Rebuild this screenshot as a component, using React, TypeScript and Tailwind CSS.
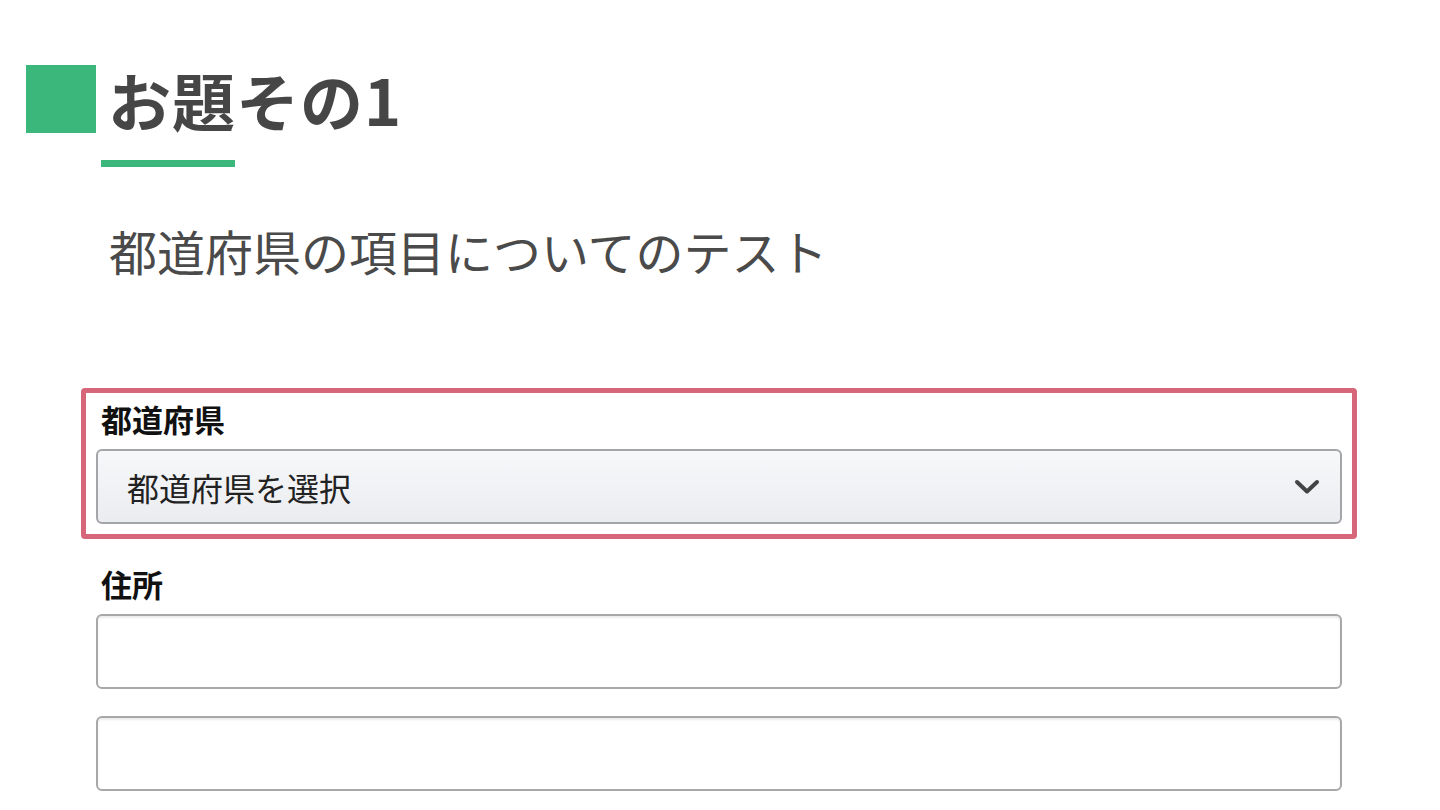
export default function App() {
  const jp = { fontFamily: '"Noto Sans CJK JP", "Noto Sans", sans-serif' };

  return (
    <div className="min-h-screen bg-white text-[#444]" style={jp}>
      {/* Title */}
      <div className="flex items-center pt-[65px] pl-[26px] gap-[12px]">
        <div className="w-[70px] h-[68px] bg-[#3cb77c]" />
        <h1 className="text-[63px] leading-[68px] font-bold text-[#464646] tracking-[1px]">
          お題その1
        </h1>
      </div>
      <div className="ml-[101px] mt-[27px] w-[134px] h-[7px] bg-[#3cb77c]" />

      <p className="ml-[109px] mt-[54px] text-[48px] leading-[58px] font-normal text-[#4a4a4a]">
        都道府県の項目についてのテスト
      </p>

      {/* Form */}
      <div className="ml-[81px] mr-[83px] mt-[109px]">
        <div className="border-[5px] border-[#d8667a] rounded-[4px] pt-[6px] pb-[10px] px-[10px]">
          <label className="block pl-[5px] text-[31px] leading-[40px] font-bold text-[#111]">
            都道府県
          </label>
          <div className="mt-[10px] h-[75px] flex items-center justify-between rounded-[6px] border-2 border-[#a3a5a8] bg-gradient-to-b from-[#f7f8fa] to-[#eaecef] pl-[29px] pr-[20px]">
            <span className="text-[32px] text-[#222]">都道府県を選択</span>
            <svg width="26" height="16" viewBox="0 0 26 16" fill="none">
              <polyline
                points="3,3 13,12.5 23,3"
                stroke="#444"
                strokeWidth="4"
                strokeLinecap="round"
                strokeLinejoin="round"
              />
            </svg>
          </div>
        </div>

        <div className="px-[15px]">
          <label className="block mt-[25px] pl-[5px] text-[31px] leading-[40px] font-bold text-[#111]">
            住所
          </label>
          <div className="mt-[10px] h-[75px] rounded-[6px] border-2 border-[#a8a8a8] bg-white shadow-[inset_0_2px_2px_rgba(0,0,0,0.08)]" />
          <div className="mt-[27px] h-[75px] rounded-[6px] border-2 border-[#a8a8a8] bg-white shadow-[inset_0_2px_2px_rgba(0,0,0,0.08)]" />
        </div>
      </div>
    </div>
  );
}
